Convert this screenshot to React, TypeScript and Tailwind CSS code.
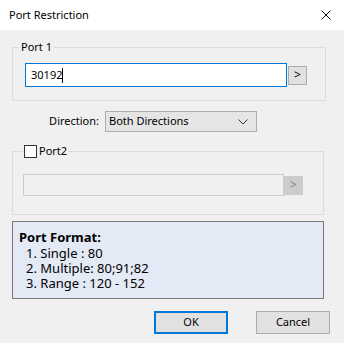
import React from "react";

const formats = ["1. Single : 80", "2. Multiple: 80;91;82", "3. Range : 120 - 152"];

function ArrowButton({ disabled }: { disabled?: boolean }) {
  return (
    <button
      className={
        "w-[19px] h-[19px] flex items-center justify-center border text-[12px] leading-none " +
        (disabled
          ? "bg-[#cccccc] border-[#cccccc] text-[#838383]"
          : "bg-[#e1e1e1] border-[#adadad] text-[#000]")
      }
    >
      &gt;
    </button>
  );
}

export default function App() {
  return (
    <div
      className="w-[344px] h-[343px] bg-[#f0f0f0] text-black text-[11px] flex flex-col overflow-hidden"
      style={{ fontFamily: '"Segoe UI", "Noto Sans", sans-serif' }}
    >
      {/* Title bar */}
      <div className="h-[30px] bg-white flex items-center justify-between pl-[9px] pr-[12px] shrink-0">
        <span className="text-[11px]">Port Restriction</span>
        <svg width="10" height="10" viewBox="0 0 10 10" className="mr-[1px]">
          <path d="M0.5 0.5 L9.5 9.5 M9.5 0.5 L0.5 9.5" stroke="#111" strokeWidth="1" />
        </svg>
      </div>

      <div className="flex flex-col px-[12px] pr-[20px]">
        {/* Port 1 */}
        <fieldset className="mt-[9px] border border-[#dcdcdc] pl-[6px] pr-[18px] pt-[8px] pb-[13px]">
          <legend className="px-[2px] leading-[16px]">Port 1</legend>
          <div className="flex items-center pl-[6px]">
            <div className="w-[262px] h-[24px] border border-[#0078d7] bg-white flex items-center pl-[5px]">
              <span>30192</span>
              <span className="w-px h-[15px] bg-black" />
            </div>
            <div className="ml-[1px]">
              <ArrowButton />
            </div>
          </div>
        </fieldset>

        {/* Direction */}
        <div className="flex items-center mt-[10px] h-[21px]">
          <span className="w-[93px] text-right pr-[6px]">Direction:</span>
          <div className="w-[152px] h-[21px] bg-[#e5e5e5] border border-[#adadad] flex items-center justify-between pl-[3px] pr-[8px]">
            <span>Both Directions</span>
            <svg width="10" height="6" viewBox="0 0 10 6">
              <path d="M0.5 0.5 L5 5 L9.5 0.5" stroke="#333" strokeWidth="1" fill="none" />
            </svg>
          </div>
        </div>

        {/* Port 2 */}
        <fieldset className="mt-[11px] border border-[#dcdcdc] pl-[10px] pr-[18px] pt-[15px] pb-[18px]">
          <legend className="px-[1px] flex items-center leading-[16px]">
            <span className="w-[13px] h-[13px] border border-[#333] bg-white mr-[2px]" />
            <span>Port2</span>
          </legend>
          <div className="flex items-center">
            <div className="w-[261px] h-[22px] border border-[#cccccc] bg-[#f0f0f0]" />
            <ArrowButton disabled />
          </div>
        </fieldset>

        {/* Port format info */}
        <div className="mt-[6px] h-[78px] border border-[#7a7a7a] bg-[#e3eaf6] pl-[6px] pt-[7px]">
          <div className="font-bold text-[13px] leading-[17px]">Port Format:</div>
          <div className="pl-[7px] leading-[15px] text-[13px]">
            {formats.map((f) => (
              <div key={f}>{f}</div>
            ))}
          </div>
        </div>

        {/* Buttons */}
        <div className="flex justify-end gap-[28px] mt-[12px] -mr-[6px]">
          <button className="w-[74px] h-[23px] bg-[#e1e1e1] border-2 border-[#0078d7]">OK</button>
          <button className="w-[74px] h-[23px] bg-[#e1e1e1] border border-[#adadad]">Cancel</button>
        </div>
      </div>
    </div>
  );
}
